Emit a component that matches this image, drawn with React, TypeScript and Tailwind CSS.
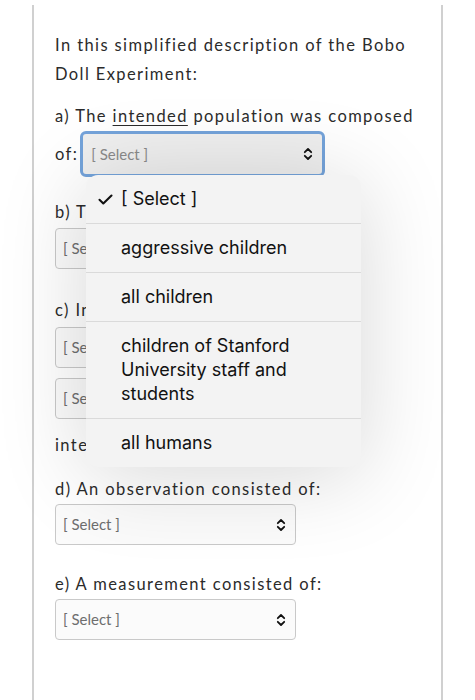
import React from "react";

const OPTIONS = [
  "[ Select ]",
  "aggressive children",
  "all children",
  "children of Stanford University staff and students",
  "all humans",
];

function Chevrons() {
  return (
    <svg width="10" height="14" viewBox="0 0 10 14" fill="none" aria-hidden>
      <path d="M1.8 5.2 5 2 8.2 5.2" stroke="#111" strokeWidth="1.8" strokeLinecap="round" strokeLinejoin="round" />
      <path d="M1.8 8.8 5 12 8.2 8.8" stroke="#111" strokeWidth="1.8" strokeLinecap="round" strokeLinejoin="round" />
    </svg>
  );
}

function Check() {
  return (
    <svg width="15" height="11" viewBox="0 0 15 11" fill="none" aria-hidden>
      <path d="M1.5 5.8 5.3 9.5 13.5 1.5" stroke="#111" strokeWidth="2.1" strokeLinecap="round" strokeLinejoin="round" />
    </svg>
  );
}

function SelectBox({ className = "" }: { className?: string }) {
  return (
    <div
      className={`flex h-[41px] w-[241px] items-center justify-between rounded-[4px] border border-[#c9c9c9] bg-[#fbfbfb] pr-[9px] pl-[7px] ${className}`}
    >
      <span className="text-[15px] tracking-normal text-[#6e6e6e]">[ Select ]</span>
      <Chevrons />
    </div>
  );
}

function OpenMenu() {
  return (
    <div className="absolute top-[175px] left-[86px] w-[275px] overflow-hidden rounded-[12px] bg-[#f3f3f3] font-['Inter',sans-serif] text-[18px] leading-[24px] tracking-normal text-[#111] shadow-[0_8px_90px_rgba(0,0,0,0.16)]">
      {OPTIONS.map((opt, i) => (
        <div
          key={opt}
          className={`relative py-3 pr-6 pl-[35px] ${i < OPTIONS.length - 1 ? "border-b border-[#dadada]" : ""}`}
        >
          {i === 0 && (
            <span className="absolute top-[19px] left-[12px]">
              <Check />
            </span>
          )}
          {opt}
        </div>
      ))}
    </div>
  );
}

export default function App() {
  return (
    <div className="relative min-h-[700px] bg-white px-[32px] pt-[5px] font-['Lato',sans-serif] text-[16.5px] leading-[29px] tracking-[1.4px] text-[#2b2b2b]">
      <div className="min-h-[695px] border-x-2 border-[#d0d0d0] pt-[26px] pl-[21px]">
        <p>
          In this simplified description of the Bobo
          <br />
          Doll Experiment:
        </p>

        <p className="mt-[13px]">
          a) The <span className="underline underline-offset-[3px]">intended</span> population was composed
        </p>
        <div className="flex h-[46px] items-center">
          <span>of:</span>
          <div className="ml-[2px] flex h-[46px] w-[245px] items-center justify-between rounded-[6px] border-[3px] border-[#74a3da] bg-[#efefef] pr-[9px] pl-[8px]">
            <span className="text-[15px] tracking-normal text-[#8a8a8a]">[ Select ]</span>
            <Chevrons />
          </div>
        </div>

        <p className="mt-[21px]">b) The actual sample was:</p>
        <SelectBox className="mt-[1px] h-[40px]" />

        <p className="mt-[27px]">c) In the experiment,</p>
        <SelectBox className="mt-[2px] h-[40px]" />
        <SelectBox className="mt-[10px] h-[40px]" />
        <p className="mt-[12px]">intervened.</p>

        <p className="mt-[15px]">d) An observation consisted of:</p>
        <SelectBox />

        <p className="mt-[25px]">e) A measurement consisted of:</p>
        <SelectBox />
      </div>
      <OpenMenu />
    </div>
  );
}
